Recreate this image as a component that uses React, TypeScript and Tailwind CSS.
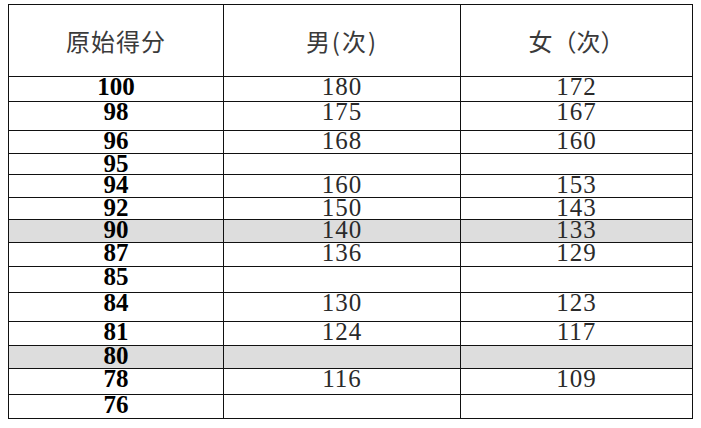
const rows: { score: string; male: string; female: string; h: string; shade?: boolean }[] = [
  { score: '100', male: '180', female: '172', h: 'h-[25px]' },
  { score: '98', male: '175', female: '167', h: 'h-[29px]' },
  { score: '96', male: '168', female: '160', h: 'h-[23px]' },
  { score: '95', male: '', female: '', h: 'h-[21px]' },
  { score: '94', male: '160', female: '153', h: 'h-[23px]' },
  { score: '92', male: '150', female: '143', h: 'h-[22px]' },
  { score: '90', male: '140', female: '133', h: 'h-[23px]', shade: true },
  { score: '87', male: '136', female: '129', h: 'h-[24px]' },
  { score: '85', male: '', female: '', h: 'h-[26px]' },
  { score: '84', male: '130', female: '123', h: 'h-[29px]' },
  { score: '81', male: '124', female: '117', h: 'h-[24px]' },
  { score: '80', male: '', female: '', h: 'h-[23px]', shade: true },
  { score: '78', male: '116', female: '109', h: 'h-[26px]' },
  { score: '76', male: '', female: '', h: 'h-[24px]' },
]

export default function App() {
  return (
    <div className="w-[701px] h-[428px] bg-white pt-1 pl-2">
      <div className="w-[685px] border border-[#111]">
        {/* header */}
        <div className="grid grid-cols-[214px_237px_232px] h-[71px] text-[24px] text-[#3a3a3a] font-[family-name:'Noto_Sans_CJK_SC',sans-serif]">
          <div className="flex items-center justify-center tracking-[1px]">原始得分</div>
          <div className="flex items-center justify-center border-l border-[#111] tracking-[2px]">男(次)</div>
          <div className="flex items-center justify-center border-l border-[#111]">女（次）</div>
        </div>

        {rows.map((r) => (
          <div
            key={r.score}
            className={`grid grid-cols-[214px_237px_232px] border-t border-[#111] text-[25px] leading-[20px] font-[family-name:'Liberation_Serif',serif] ${r.h} ${
              r.shade ? 'bg-[#dddddd]' : 'bg-white'
            }`}
          >
            <div className="text-center font-bold text-black">{r.score}</div>
            <div className="text-center border-l border-[#111] text-[#2a2a2a] tracking-[1px]">{r.male}</div>
            <div className="text-center border-l border-[#111] text-[#2a2a2a] tracking-[1px]">{r.female}</div>
          </div>
        ))}
      </div>
    </div>
  )
}
